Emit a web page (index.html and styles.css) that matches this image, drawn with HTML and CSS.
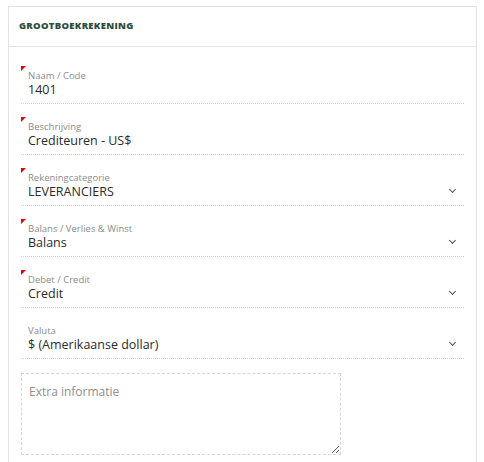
FILE: index.html
```html
<!DOCTYPE html>
<html lang="nl">
<head>
  <meta charset="UTF-8" />
  <meta name="viewport" content="width=device-width, initial-scale=1.0"/>
  <title>Grootboekrekening</title>
  <link rel="stylesheet" href="styles.css">
</head>
<body>

  <div class="panel">
    <div class="panel-header">
      <h2>Grootboekrekening</h2>
    </div>

    <div class="panel-body">
      <div class="field required">
        <label>Naam / Code</label>
        <div class="value">1401</div>
      </div>

      <div class="field required">
        <label>Beschrijving</label>
        <div class="value">Crediteuren - US$</div>
      </div>

      <div class="field required select">
        <label>Rekeningcategorie</label>
        <div class="value">LEVERANCIERS <span class="chevron"></span></div>
      </div>

      <div class="field required select">
        <label>Balans / Verlies &amp; Winst</label>
        <div class="value">Balans <span class="chevron"></span></div>
      </div>

      <div class="field required select">
        <label>Debet / Credit</label>
        <div class="value">Credit <span class="chevron"></span></div>
      </div>

      <div class="field select">
        <label>Valuta</label>
        <div class="value">$ (Amerikaanse dollar) <span class="chevron"></span></div>
      </div>

      <textarea class="extra" placeholder="Extra informatie"></textarea>
    </div>
  </div>

</body>
</html>
```

FILE: styles.css
```css
* {
  margin: 0; padding: 0; box-sizing: border-box;
  font-family: 'Open Sans', sans-serif;
}
body {
  background: #fff;
  color: #333;
  padding: 6px 7px 0 8px;
}
.panel {
  border: 1px solid #e3e3e3;
  border-bottom: none;
  min-height: 456px;
}
.panel-header {
  height: 40px;
  border-bottom: 1px solid #e6e6e6;
  display: flex;
  align-items: center;
  padding: 0 10px 3px;
}
.panel-header h2 {
  font-size: 9.5px;
  font-weight: 800;
  text-transform: uppercase;
  letter-spacing: 0.3px;
  color: #2a4d3e;
}
.panel-body {
  padding: 6px 12px 0;
}
.field {
  position: relative;
  padding: 16px 0 5px 7px;
  border-bottom: 1px dotted #cfcfcf;
}
.field.required::before {
  content: '';
  position: absolute;
  top: 13px;
  left: 0;
  border-top: 5px solid #e8000b;
  border-right: 5px solid transparent;
}
.field label {
  display: block;
  font-size: 9.5px;
  line-height: 13px;
  color: #8c8c8c;
}
.value {
  display: flex;
  justify-content: space-between;
  font-size: 12.5px;
  line-height: 16px;
  color: #2b2b2b;
}
.chevron {
  width: 5px;
  height: 5px;
  margin: 3px 9px 0 0;
  border-right: 1px solid #555;
  border-bottom: 1px solid #555;
  transform: rotate(45deg);
}
.extra {
  display: block;
  margin-top: 14px;
  width: 320px;
  height: 82px;
  border: 1px dashed #d6d6d6;
  padding: 9px 7px;
  font-size: 12px;
  color: #333;
}
.extra::placeholder {
  color: #8f8f8f;
}
```
